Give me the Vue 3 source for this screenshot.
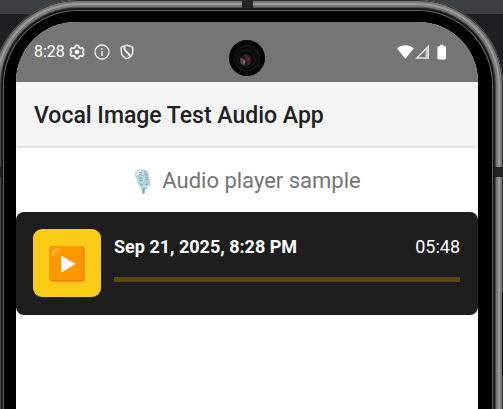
<script setup>
import { ref } from 'vue'

const clock = '8:28'
const track = { date: 'Sep 21, 2025, 8:28 PM', duration: '05:48' }
const progress = ref(0)
const playing = ref(false)
</script>

<template>
  <div class="desk">
    <div class="phone">
      <span class="band band-top"></span>
      <span class="band band-left"></span>
      <span class="band band-right"></span>
      <span class="side-key"></span>
      <div class="screen">
        <svg class="camera" viewBox="0 0 36 36" aria-hidden="true">
          <circle cx="18" cy="18" r="18" fill="#030303" />
          <circle cx="18" cy="18" r="12.5" fill="#0c0c0d" stroke="#171718" stroke-width="1.5" />
          <circle cx="17.5" cy="19" r="8.500" fill="#090909" stroke="#1c1c1e" />
          <circle cx="17" cy="20" r="6" fill="#201a1d" />
          <path d="M11.500 17.500a6 6 0 0 0 4 8l1.500-5z" fill="#504f4b" />
          <path d="M14 15.500a6 6 0 0 1 6 0l-2 4z" fill="#372c31" />
          <circle cx="18.500" cy="19.500" r="2.600" fill="#571a30" />
          <circle cx="19.500" cy="19" r=".8" fill="#9c2f4e" />
          <circle cx="15" cy="22" r="1.200" fill="#77705f" />
          <path d="M18 23l3-1-1 3z" fill="#2c3355" />
        </svg>

        <div class="status">
          <span class="clock">{{ clock }}</span>
          <svg class="status-icon" viewBox="0 0 16 16" aria-hidden="true">
            <path
              d="M6.500 1.500h3l.5 2 1.500.9 2-.6 1.400 2.500-1.400 1.400v.8l1.400 1.400-1.400 2.400-2-.6-1.500.9-.5 1.900h-3l-.5-1.900-1.500-.9-2 .6-1.400-2.400 1.400-1.400v-.8L1.100 6.300l1.400-2.500 2 .6L6 3.500z"
              fill="none" stroke="#fff" stroke-width="1.500" stroke-linejoin="round"
            />
            <circle cx="8" cy="8" r="2.300" fill="#fff" />
          </svg>
          <svg class="status-icon spaced" viewBox="0 0 16 16" aria-hidden="true">
            <circle cx="8" cy="8" r="7" fill="none" stroke="#eee" stroke-width="1.300" />
            <path d="M8 7v5M8 4v1.700" stroke="#ddd" stroke-width="1.600" />
          </svg>
          <svg class="status-icon spaced" viewBox="0 0 16 16" aria-hidden="true">
            <path
              d="M8 1.200L2.300 3.200v4.300c0 3.400 2.400 6 5.700 7.200 3.300-1.200 5.700-3.800 5.700-7.200V3.200z"
              fill="none" stroke="#fff" stroke-width="1.400" stroke-linejoin="round"
            />
            <path d="M5.600 3v1.800c0 1.200.8 2 1.800 2.900l2 1.800c.9.800 1.200 1.700 1.200 2.900" fill="none" stroke="#fff" stroke-width="1.700" />
          </svg>
          <svg class="system-icons" viewBox="0 0 50 16" aria-hidden="true">
            <path d="M0 4.500C4.500.3 12.300.3 16.800 4.500L8.400 14.700z" fill="#fff" />
            <path d="M19.800 14H31.300V2.500z" fill="none" stroke="#e6e6e6" stroke-width="1.400" />
            <path d="M28.500 6v8h2.500V3.500z" fill="#c8c8c8" />
            <path d="M43 .8h3.500v1.500h1.300c.6 0 1.200.5 1.200 1.200v10.800c0 .7-.5 1.200-1.200 1.200h-6.200c-.7 0-1.200-.5-1.200-1.200V3.500c0-.7.5-1.200 1.200-1.200H43z" fill="#fff" />
          </svg>
        </div>

        <header class="app-bar">
          <h1>Vocal Image Test Audio App</h1>
        </header>

        <main>
          <h2 class="heading">
            <svg class="mic" viewBox="0 0 20 26" aria-hidden="true">
              <path d="M7 17l8-1-1 5-2 1v3l-3 1-.5-4z" fill="#a4d3de" />
              <path d="M10 18.500l1.500-.3V25l-1.500.4z" fill="#6fa9b9" />
              <path d="M2 7C1.500 3.500 4.500 1.200 8 1c4-.3 7 1.200 7.700 5L17.200 15c.3 3-2 4.200-5.200 4.600-3.300.3-6-.7-6.700-3.600z" fill="#b9dce4" />
              <path d="M3 6C3.500 3 6 1.700 8.500 1.700L10 7l-7 1z" fill="#d7edf1" />
              <path d="M2.200 8.500l13.800-1.600M4.800 15.500l12.400-1.300" stroke="#9cc8d3" stroke-width="1.200" />
              <path d="M6 4.500l3-.4M6 6.500l3-.4M11 4l2.500-.2M11.500 6h2.500M5.500 10.500l4-.5M6 12.700l4-.5M12 9.800l3-.4M12.500 12l3-.4M7 17l3-.4M12 16.500l3-.4" stroke="#839da8" stroke-width="1" />
            </svg>
            <span>Audio player sample</span>
          </h2>

          <section class="player">
            <button class="play" type="button" aria-label="Play" @click="playing = !playing">
              <svg viewBox="0 0 36 36" aria-hidden="true">
                <rect x=".5" y=".5" width="35" height="35" rx="2" fill="#ef7c0c" />
                <rect x=".5" y=".5" width="33.500" height="33.500" rx="2" fill="#ff9800" />
                <path d="M3 9.500C2.600 5 5 2.600 10.500 2.800c.8 1-.2 1.800-1.500 2-2.600.4-3.600 1.600-4 3.900-.3 1.400-1.400 1.700-2 .8z" fill="#ffbd52" />
                <path d="M12 9.500v17.200L26.500 18z" fill="#fafafa" />
              </svg>
            </button>
            <div class="details">
              <div class="meta">
                <strong>{{ track.date }}</strong>
                <time>{{ track.duration }}</time>
              </div>
              <progress class="bar" :value="progress" max="348" aria-label="Playback position"></progress>
            </div>
          </section>
        </main>
      </div>
    </div>
  </div>
</template>

<style>
body {
  margin: 0;
}
</style>

<style scoped>
.desk {
  height: 100vh;
  display: flex;
  overflow: hidden;
  background: linear-gradient(#3c3f41 14px, #1e1f22 14px);
  font-family: Roboto, "Liberation Sans", sans-serif;
}

/* The body of the phone runs on below the bottom edge of the window. */
.phone {
  position: relative;
  flex: 1;
  display: flex;
  box-sizing: border-box;
  margin: 0 0 -24px -7px;
  padding: 22px 25px 0 23px;
  border-radius: 85px 85px 0 0;
  background: #000;
  box-shadow:
    inset 0 0 0 1px #303030,
    inset 0 0 0 3px #777,
    inset 0 0 0 5px #999,
    inset 0 0 0 7px #777,
    inset 0 0 0 8px #484848,
    inset 0 0 0 10px #181818,
    inset 0 0 0 11px #626262;
}

.band {
  position: absolute;
  background: #242424;
}

.band-top {
  top: 0;
  left: 50%;
  width: 11px;
  height: 8px;
  margin-left: -6px;
}

.band-left,
.band-right {
  top: 167px;
  width: 8px;
  height: 10px;
}

.band-left {
  left: 0;
}

.band-right {
  right: 0;
}

.side-key {
  position: absolute;
  top: 293px;
  right: 0;
  width: 1px;
  height: 82px;
  background: #050505;
}

.screen {
  position: relative;
  flex: 1;
  min-width: 0;
  overflow: hidden;
  border-radius: 60px 60px 0 0;
  background: #fff;
}

.camera {
  position: absolute;
  top: 18px;
  left: 50%;
  width: 36px;
  height: 36px;
  margin-left: -18px;
}

.status {
  display: flex;
  align-items: center;
  height: 60px;
  box-sizing: border-box;
  padding: 0 31px 0 18px;
  background: #757575;
  color: #fff;
}

.clock {
  font-size: 16px;
  line-height: 20px;
}

.status-icon {
  width: 16px;
  height: 16px;
  margin-left: 4px;
}

.spaced {
  margin-left: 9px;
}

.system-icons {
  width: 50px;
  height: 16px;
  margin-left: auto;
}

.app-bar {
  display: flex;
  align-items: center;
  box-sizing: border-box;
  height: 64px;
  padding: 3px 18px 0;
  background: #f4f4f4;
  box-shadow: 0 1px 3px rgba(0, 0, 0, 0.2);
}

h1 {
  margin: 0;
  color: #202124;
  font-size: 23px;
  font-weight: 500;
  line-height: 30px;
  white-space: nowrap;
}

.heading {
  display: flex;
  align-items: center;
  justify-content: center;
  gap: 9px;
  margin: 0;
  padding: 20px 0 16px;
  color: #757575;
  font-size: 22px;
  font-weight: 400;
  line-height: 30px;
}

.mic {
  width: 20px;
  height: 26px;
}

.player {
  display: flex;
  gap: 13px;
  padding: 17px 18px 18px 17px;
  border-radius: 8px;
  background: #1e1e1e;
  color: #fff;
}

.play {
  display: flex;
  flex: none;
  align-items: center;
  justify-content: center;
  box-sizing: border-box;
  width: 68px;
  height: 68px;
  padding: 2px 0 0;
  border: 0;
  border-radius: 9px;
  background: #facc15;
  cursor: pointer;
}

.play svg {
  width: 36px;
  height: 36px;
}

.details {
  flex: 1;
  min-width: 0;
  padding-top: 7px;
}

.meta {
  display: flex;
  justify-content: space-between;
  font-size: 18px;
  line-height: 22px;
}

.meta strong {
  font-weight: 700;
}

.bar {
  display: block;
  width: 100%;
  height: 5px;
  margin-top: 19px;
  border: 0;
  appearance: none;
  background: #574817;
}

.bar::-webkit-progress-bar {
  background: #574817;
}

.bar::-webkit-progress-value {
  background: #facc15;
}
</style>
